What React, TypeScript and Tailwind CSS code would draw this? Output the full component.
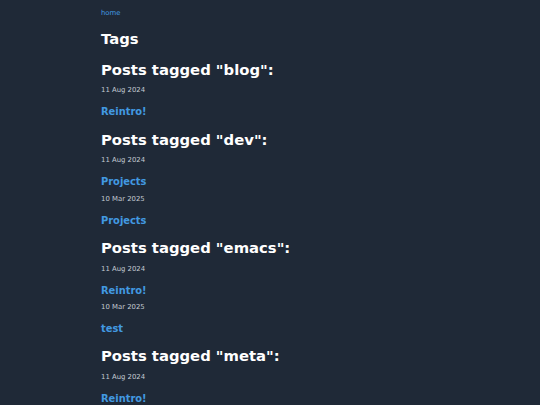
import React from 'react';

type Post = { date: string; title: string };
type TagGroup = { tag: string; posts: Post[] };

const groups: TagGroup[] = [
  { tag: 'blog', posts: [{ date: '11 Aug 2024', title: 'Reintro!' }] },
  {
    tag: 'dev',
    posts: [
      { date: '11 Aug 2024', title: 'Projects' },
      { date: '10 Mar 2025', title: 'Projects' },
    ],
  },
  {
    tag: 'emacs',
    posts: [
      { date: '11 Aug 2024', title: 'Reintro!' },
      { date: '10 Mar 2025', title: 'test' },
    ],
  },
  { tag: 'meta', posts: [{ date: '11 Aug 2024', title: 'Reintro!' }] },
];

export default function App() {
  return (
    <div className="min-h-[405px] w-full overflow-hidden bg-[#1f2937] font-['DejaVu_Sans',sans-serif]">
      <div className="ml-[101px] w-[338px] pt-[9px]">
        <a href="#" className="block text-[6.9px] leading-[8px] text-[#4299e1]">
          home
        </a>
        <h1 className="mt-[12.8px] text-[14.8px] leading-[18px] font-bold text-white">Tags</h1>

        <div className="mt-[12.9px] flex flex-col gap-[12.3px]">
          {groups.map((g) => (
            <section key={g.tag}>
              <h2 className="text-[14.8px] leading-[18px] font-bold text-white">
                Posts tagged "{g.tag}":
              </h2>
              <ul className="mt-[7.7px] flex flex-col gap-[6.6px]">
                {g.posts.map((p, i) => (
                  <li key={i}>
                    <p className="text-[6.9px] leading-[8px] text-[#c3c9d2]">{p.date}</p>
                    <a href="#" className="mt-[11.9px] block text-[9.9px] leading-[12px] font-bold text-[#4299e1]">
                      {p.title}
                    </a>
                  </li>
                ))}
              </ul>
            </section>
          ))}
        </div>
      </div>
    </div>
  );
}
